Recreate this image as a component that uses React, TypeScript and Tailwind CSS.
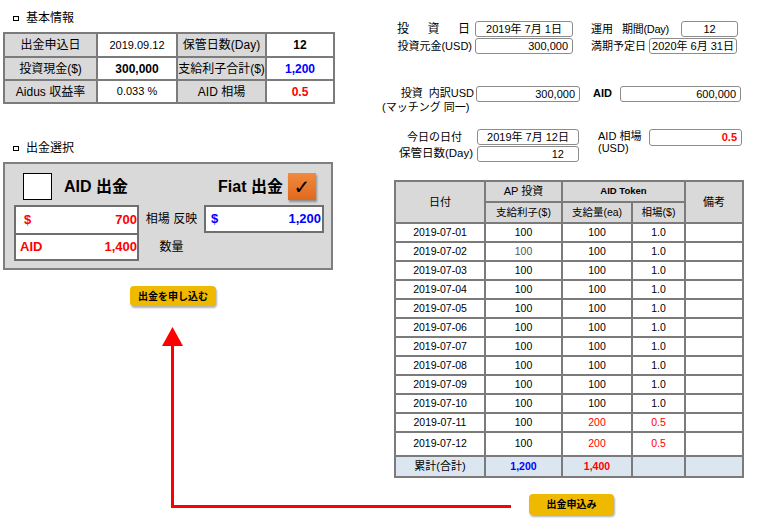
const rows = [
  { d: '2019-07-01', ap: '100', qty: '100', rate: '1.0' },
  { d: '2019-07-02', ap: '100', qty: '100', rate: '1.0', dim: true },
  { d: '2019-07-03', ap: '100', qty: '100', rate: '1.0' },
  { d: '2019-07-04', ap: '100', qty: '100', rate: '1.0' },
  { d: '2019-07-05', ap: '100', qty: '100', rate: '1.0' },
  { d: '2019-07-06', ap: '100', qty: '100', rate: '1.0' },
  { d: '2019-07-07', ap: '100', qty: '100', rate: '1.0' },
  { d: '2019-07-08', ap: '100', qty: '100', rate: '1.0' },
  { d: '2019-07-09', ap: '100', qty: '100', rate: '1.0' },
  { d: '2019-07-10', ap: '100', qty: '100', rate: '1.0' },
  { d: '2019-07-11', ap: '100', qty: '200', rate: '0.5', red: true },
  { d: '2019-07-12', ap: '100', qty: '200', rate: '0.5', red: true, tall: true },
];

function Bullet({ children }: { children: React.ReactNode }) {
  return (
    <div className="flex items-center h-[16px] pl-[10px] text-[12px]">
      <span className="w-[6px] h-[5px] border border-black mr-[7px]" />
      {children}
    </div>
  );
}

export default function App() {
  const box = 'shrink-0 h-[16px] bg-white border border-[#8c8c8c] rounded-[3px] flex items-center whitespace-nowrap text-[11px] px-[4px]';
  const cell = 'border-2 border-[#7b7b7b]';
  const gray = 'border-2 border-[#7b7b7b] bg-[#d9d9d9]';

  return (
    <div className="relative w-[759px] h-[529px] bg-white text-black overflow-hidden flex font-['Liberation_Sans','Noto_Sans_CJK_JP',sans-serif]">
      {/* Left column */}
      <div className="w-[380px] shrink-0 pl-[3px] pt-[10px]">
        <Bullet>基本情報</Bullet>

        <table className="mt-[6px] w-[330px] table-fixed border-collapse text-center">
          <colgroup>
            <col className="w-[93px]" />
            <col className="w-[80px]" />
            <col className="w-[89px]" />
            <col className="w-[68px]" />
          </colgroup>
          <tbody>
            <tr className="h-[24px]">
              <td className={`${gray} text-[12px]`}>出金申込日</td>
              <td className={`${cell} text-[11px]`}>2019.09.12</td>
              <td className={`${gray} text-[12px]`}>保管日数(Day)</td>
              <td className={`${cell} text-[12px] font-bold`}>12</td>
            </tr>
            <tr className="h-[23px]">
              <td className={`${gray} text-[12px]`}>投資現金($)</td>
              <td className={`${cell} text-[12px] font-bold`}>300,000</td>
              <td className={`${gray} text-[12px]`}>支給利子合計($)</td>
              <td className={`${cell} text-[12px] font-bold text-[#0000ff]`}>1,200</td>
            </tr>
            <tr className="h-[23px]">
              <td className={`${gray} text-[12px]`}>Aidus 収益率</td>
              <td className={`${cell} text-[11px]`}>0.033 %</td>
              <td className={`${gray} text-[12px]`}>AID 相場</td>
              <td className={`${cell} text-[12px] font-bold text-[#ff0000]`}>0.5</td>
            </tr>
          </tbody>
        </table>

        <div className="mt-[36px]">
          <Bullet>出金選択</Bullet>
        </div>

        {/* Withdrawal selection panel */}
        <div className="mt-[6px] w-[330px] h-[108px] border-2 border-[#7f7f7f] bg-[#d9d9d9]">
          <div className="flex items-center pt-[9px] pl-[18px] pr-[15px]">
            <div className="w-[29px] h-[27px] bg-white border border-black" />
            <span className="ml-[12px] text-[16px] font-bold">AID 出金</span>
            <span className="ml-auto text-[16px] font-bold">Fiat 出金</span>
            <div className="ml-[5px] w-[28px] h-[27px] bg-gradient-to-b from-[#f08a3e] to-[#e0691c] shadow-[1px_2px_2px_rgba(0,0,0,0.35)] flex items-center justify-center text-[20px] leading-none font-['DejaVu_Sans',sans-serif]">
              ✓
            </div>
          </div>

          <div className="flex mt-[5px] pl-[9px]">
            <div className="w-[125px] border-2 border-[#6f6f6f] bg-white">
              <div className="h-[26px] flex items-center justify-between pl-[8px] text-[13px] font-bold text-[#ff0000]">
                <span>$</span>
                <span>700</span>
              </div>
              <div className="h-[26px] border-t-2 border-[#6f6f6f] flex items-center justify-between pl-[4px] text-[13px] font-bold text-[#ff0000]">
                <span>AID</span>
                <span>1,400</span>
              </div>
            </div>
            <div className="w-[65px] text-[12px]">
              <div className="h-[28px] flex items-center justify-center">相場 反映</div>
              <div className="h-[28px] flex items-center justify-center">数量</div>
            </div>
            <div className="w-[120px] h-[28px] border-2 border-[#6f6f6f] bg-white flex items-center justify-between pl-[5px] pr-[1px] text-[13px] font-bold text-[#0000ff]">
              <span>$</span>
              <span>1,200</span>
            </div>
          </div>
        </div>

        <button className="mt-[16px] ml-[127px] w-[86px] h-[20px] rounded-[4px] bg-[#efb900] shadow-[1px_2px_2px_rgba(0,0,0,0.3)] text-[10px] font-bold flex items-center justify-center">
          出金を申し込む
        </button>
      </div>

      {/* Right column */}
      <div className="flex-1 pt-[21px] text-[11px] whitespace-nowrap">
        <div className="flex items-center h-[16px]">
          <div className="shrink-0 w-[95px] pl-[17px] pr-[5px] flex justify-between text-[12px]">
            <span>投</span>
            <span>資</span>
            <span>日</span>
          </div>
          <div className={`${box} w-[98px] justify-center`}>2019年 7月 1日</div>
          <div className="shrink-0 ml-[18px] w-[90px] flex text-[11px]">
            <span>運用</span>
            <span className="ml-[9px] tracking-[-0.3px]">期間(Day)</span>
          </div>
          <div className={`${box} w-[57px] justify-center`}>12</div>
        </div>

        <div className="flex items-center h-[16px] mt-[1px]">
          <div className="shrink-0 w-[95px] pr-[3px] text-right text-[11px]">投資元金(USD)</div>
          <div className={`${box} w-[98px] justify-end`}>300,000</div>
          <div className="shrink-0 ml-[18px] w-[58px] text-[11px]">満期予定日</div>
          <div className={`${box} w-[88px] justify-center px-[2px] text-[10.5px]`}>2020年 6月 31日</div>
        </div>

        <div className="flex items-start mt-[32px]">
          <div className="shrink-0 w-[96px] text-[11px] leading-[14px]">
            <div className="text-right pr-[2px]">投資&nbsp;&nbsp;内訳USD</div>
            <div className="pl-[2px]">(マッチング 同一)</div>
          </div>
          <div className={`${box} w-[104px] h-[15px] justify-end`}>300,000</div>
          <div className="shrink-0 ml-[13px] w-[27px] text-[11px] font-bold leading-[15px]">AID</div>
          <div className={`${box} w-[121px] h-[15px] justify-end`}>600,000</div>
        </div>

        <div className="flex items-start mt-[15px]">
          <div className="shrink-0">
            <div className="flex items-center h-[16px]">
              <div className="w-[97px] pr-[15px] text-right text-[11px]">今日の日付</div>
              <div className={`${box} w-[102px] justify-center`}>2019年 7月 12日</div>
            </div>
            <div className="flex items-center h-[16px] mt-[1px]">
              <div className="w-[97px] pr-[4px] text-right text-[11.5px]">保管日数(Day)</div>
              <div className={`${box} w-[102px] justify-end pr-[14px]`}>12</div>
            </div>
          </div>
          <div className="shrink-0 ml-[19px] w-[51px] text-[11px] leading-[12px] pt-[1px]">
            AID 相場
            <br />
            (USD)
          </div>
          <div className={`${box} w-[93px] h-[17px] justify-end font-bold text-[#ff0000]`}>0.5</div>
        </div>

        {/* Daily table */}
        <table className="mt-[18px] ml-[14px] w-[348px] table-fixed border-collapse text-center text-[10.5px]">
          <colgroup>
            <col className="w-[90px]" />
            <col className="w-[77px]" />
            <col className="w-[70px]" />
            <col className="w-[53px]" />
            <col className="w-[58px]" />
          </colgroup>
          <thead>
            <tr className="h-[21px]">
              <th rowSpan={2} className={`${gray} font-normal text-[11px]`}>日付</th>
              <th className={`${gray} font-normal text-[11px]`}>AP 投資</th>
              <th colSpan={2} className={`${gray} font-bold text-[9.5px]`}>AID Token</th>
              <th rowSpan={2} className={`${gray} font-normal text-[11px]`}>備考</th>
            </tr>
            <tr className="h-[21px]">
              <th className={`${gray} font-normal`}>支給利子($)</th>
              <th className={`${gray} font-normal`}>支給量(ea)</th>
              <th className={`${gray} font-normal`}>相場($)</th>
            </tr>
          </thead>
          <tbody>
            {rows.map((r) => (
              <tr key={r.d} className={r.tall ? 'h-[24px]' : 'h-[19px]'}>
                <td className={cell}>{r.d}</td>
                <td className={`${cell} ${r.dim ? 'text-[#555555]' : ''}`}>{r.ap}</td>
                <td className={`${cell} ${r.red ? 'text-[#ff0000]' : ''}`}>{r.qty}</td>
                <td className={`${cell} ${r.red ? 'text-[#ff0000]' : ''}`}>{r.rate}</td>
                <td className={cell}></td>
              </tr>
            ))}
            <tr className="h-[21px] bg-[#dce6f1]">
              <td className={`${cell} text-[11px]`}>累計(合計)</td>
              <td className={`${cell} font-bold text-[#0000ff]`}>1,200</td>
              <td className={`${cell} font-bold text-[#ff0000]`}>1,400</td>
              <td className={cell}></td>
              <td className={cell}></td>
            </tr>
          </tbody>
        </table>

        <button className="mt-[16px] ml-[149px] w-[85px] h-[21px] rounded-[4px] bg-[#efb900] shadow-[1px_2px_2px_rgba(0,0,0,0.3)] text-[10px] font-bold flex items-center justify-center">
          出金申込み
        </button>
      </div>

      {/* Red arrow from lower button to the upper one */}
      <svg className="absolute inset-0 pointer-events-none" width="759" height="529" viewBox="0 0 759 529">
        <polyline points="172.5,344 172.5,506.5 511,506.5" fill="none" stroke="#ff0000" strokeWidth="3" />
        <polygon points="172.5,327 162,346 183,346" fill="#ff0000" />
      </svg>
    </div>
  );
}
